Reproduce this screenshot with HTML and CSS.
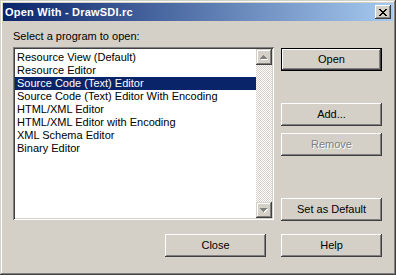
FILE: index.html
```html
<!DOCTYPE html>
<html>
<head>
<meta charset="utf-8">
<link rel="stylesheet" href="styles.css">
</head>
<body>
<div class="window">
  <div class="titlebar">
    <span class="title">Open With - DrawSDI.rc</span>
    <div class="tb-close">
      <svg width="8" height="7" viewBox="0 0 8 7"><path d="M0 0h2v1h-2zM6 0h2v1h-2zM1 1h2v1h-2zM5 1h2v1h-2zM2 2h4v1h-4zM3 3h2v1h-2zM2 4h4v1h-4zM1 5h2v1h-2zM5 5h2v1h-2zM0 6h2v1h-2zM6 6h2v1h-2z" fill="#000"/></svg>
    </div>
  </div>
  <div class="client">
    <div class="label">Select a program to open:</div>
    <div class="main">
      <div class="listbox">
        <ul class="items">
          <li>Resource View (Default)</li>
          <li>Resource Editor</li>
          <li class="sel">Source Code (Text) Editor</li>
          <li>Source Code (Text) Editor With Encoding</li>
          <li>HTML/XML Editor</li>
          <li>HTML/XML Editor with Encoding</li>
          <li>XML Schema Editor</li>
          <li>Binary Editor</li>
        </ul>
        <div class="vscroll">
          <div class="arrow">
            <svg width="16" height="16" viewBox="0 0 16 16"><path d="M8 7h1v1h-1zM7 8h3v1h-3zM6 9h5v1h-5zM5 10h7v1h-7z" fill="#fff"/><path d="M7 6h1v1h-1zM6 7h3v1h-3zM5 8h5v1h-5zM4 9h7v1h-7z" fill="#808080"/></svg>
          </div>
          <div class="track"></div>
          <div class="arrow">
            <svg width="16" height="16" viewBox="0 0 16 16"><path d="M5 7h7v1h-7zM6 8h5v1h-5zM7 9h3v1h-3zM8 10h1v1h-1z" fill="#fff"/><path d="M4 6h7v1h-7zM5 7h5v1h-5zM6 8h3v1h-3zM7 9h1v1h-1z" fill="#808080"/></svg>
          </div>
        </div>
      </div>
      <div class="side">
        <div class="btn default">Open</div>
        <div class="btn add">Add...</div>
        <div class="btn remove disabled">Remove</div>
        <div class="btn setdef">Set as Default</div>
      </div>
    </div>
    <div class="footer">
      <div class="btn">Close</div>
      <div class="btn">Help</div>
    </div>
  </div>
</div>
</body>
</html>
```
FILE: styles.css
```css
html, body {
  margin: 0;
  padding: 0;
  background: #d4d0c8;
}
body {
  font-family: "Liberation Sans", Arial, sans-serif;
  font-size: 11px;
  line-height: 13px;
  color: #000;
}
.window {
  width: 396px;
  height: 275px;
  box-sizing: border-box;
  padding: 3px;
  background: #d4d0c8;
  box-shadow: inset -1px -1px #404040, inset 1px 1px #d4d0c8, inset -2px -2px #808080, inset 2px 2px #fff;
}
.titlebar {
  height: 18px;
  display: flex;
  align-items: center;
  justify-content: space-between;
  padding: 0 2px 0 2px;
  background: linear-gradient(to right, #0a246a, #a6caf0);
}
.title {
  color: #fff;
  font-weight: bold;
  font-size: 11px;
  letter-spacing: 0.2px;
}
.tb-close {
  width: 16px;
  height: 14px;
  box-sizing: border-box;
  background: #d4d0c8;
  display: flex;
  align-items: center;
  justify-content: center;
  padding-right: 1px;
  box-shadow: inset -1px -1px #404040, inset 1px 1px #fff, inset -2px -2px #808080, inset 2px 2px #d4d0c8;
}
.tb-close svg { display: block; }
.client {
  padding: 9px 0 0 10px;
}
.label {
  height: 13px;
  margin-bottom: 4px;
}
.main {
  display: flex;
  gap: 7px;
}
.listbox {
  width: 261px;
  height: 173px;
  box-sizing: border-box;
  padding: 2px;
  background: #fff;
  display: flex;
  box-shadow: inset 1px 1px #808080, inset -1px -1px #fff, inset 2px 2px #404040, inset -2px -2px #d4d0c8;
}
.items {
  list-style: none;
  margin: 0;
  padding: 2px 0 0 0;
  flex: 1;
}
.items li {
  height: 13px;
  padding-left: 2px;
  white-space: nowrap;
}
.items li.sel {
  background: #0a246a;
  color: #fff;
}
.vscroll {
  width: 16px;
  display: flex;
  flex-direction: column;
}
.arrow {
  width: 16px;
  height: 16px;
  background: #d4d0c8;
  box-shadow: inset -1px -1px #404040, inset 1px 1px #d4d0c8, inset -2px -2px #808080, inset 2px 2px #fff;
}
.arrow svg { display: block; }
.track {
  flex: 1;
  background: repeating-conic-gradient(#d4d0c8 0 25%, #fff 0 50%) 0 0 / 2px 2px;
}
.side {
  width: 101px;
  padding-top: 1px;
  display: flex;
  flex-direction: column;
}
.btn {
  width: 101px;
  height: 23px;
  box-sizing: border-box;
  background: #d4d0c8;
  display: flex;
  align-items: center;
  justify-content: center;
  box-shadow: inset -1px -1px #404040, inset 1px 1px #fff, inset -2px -2px #808080, inset 2px 2px #d4d0c8;
}
.btn.default {
  box-shadow: inset 0 0 0 1px #000, inset -2px -2px #404040, inset 2px 2px #fff, inset -3px -3px #808080;
}
.btn.add { margin-top: 32px; }
.btn.remove { margin-top: 7px; }
.btn.setdef { margin-top: 42px; }
.btn.disabled {
  color: #808080;
  text-shadow: 1px 1px #fff;
}
.footer {
  width: 369px;
  margin-top: 13px;
  display: flex;
  justify-content: flex-end;
  gap: 15px;
}
```
